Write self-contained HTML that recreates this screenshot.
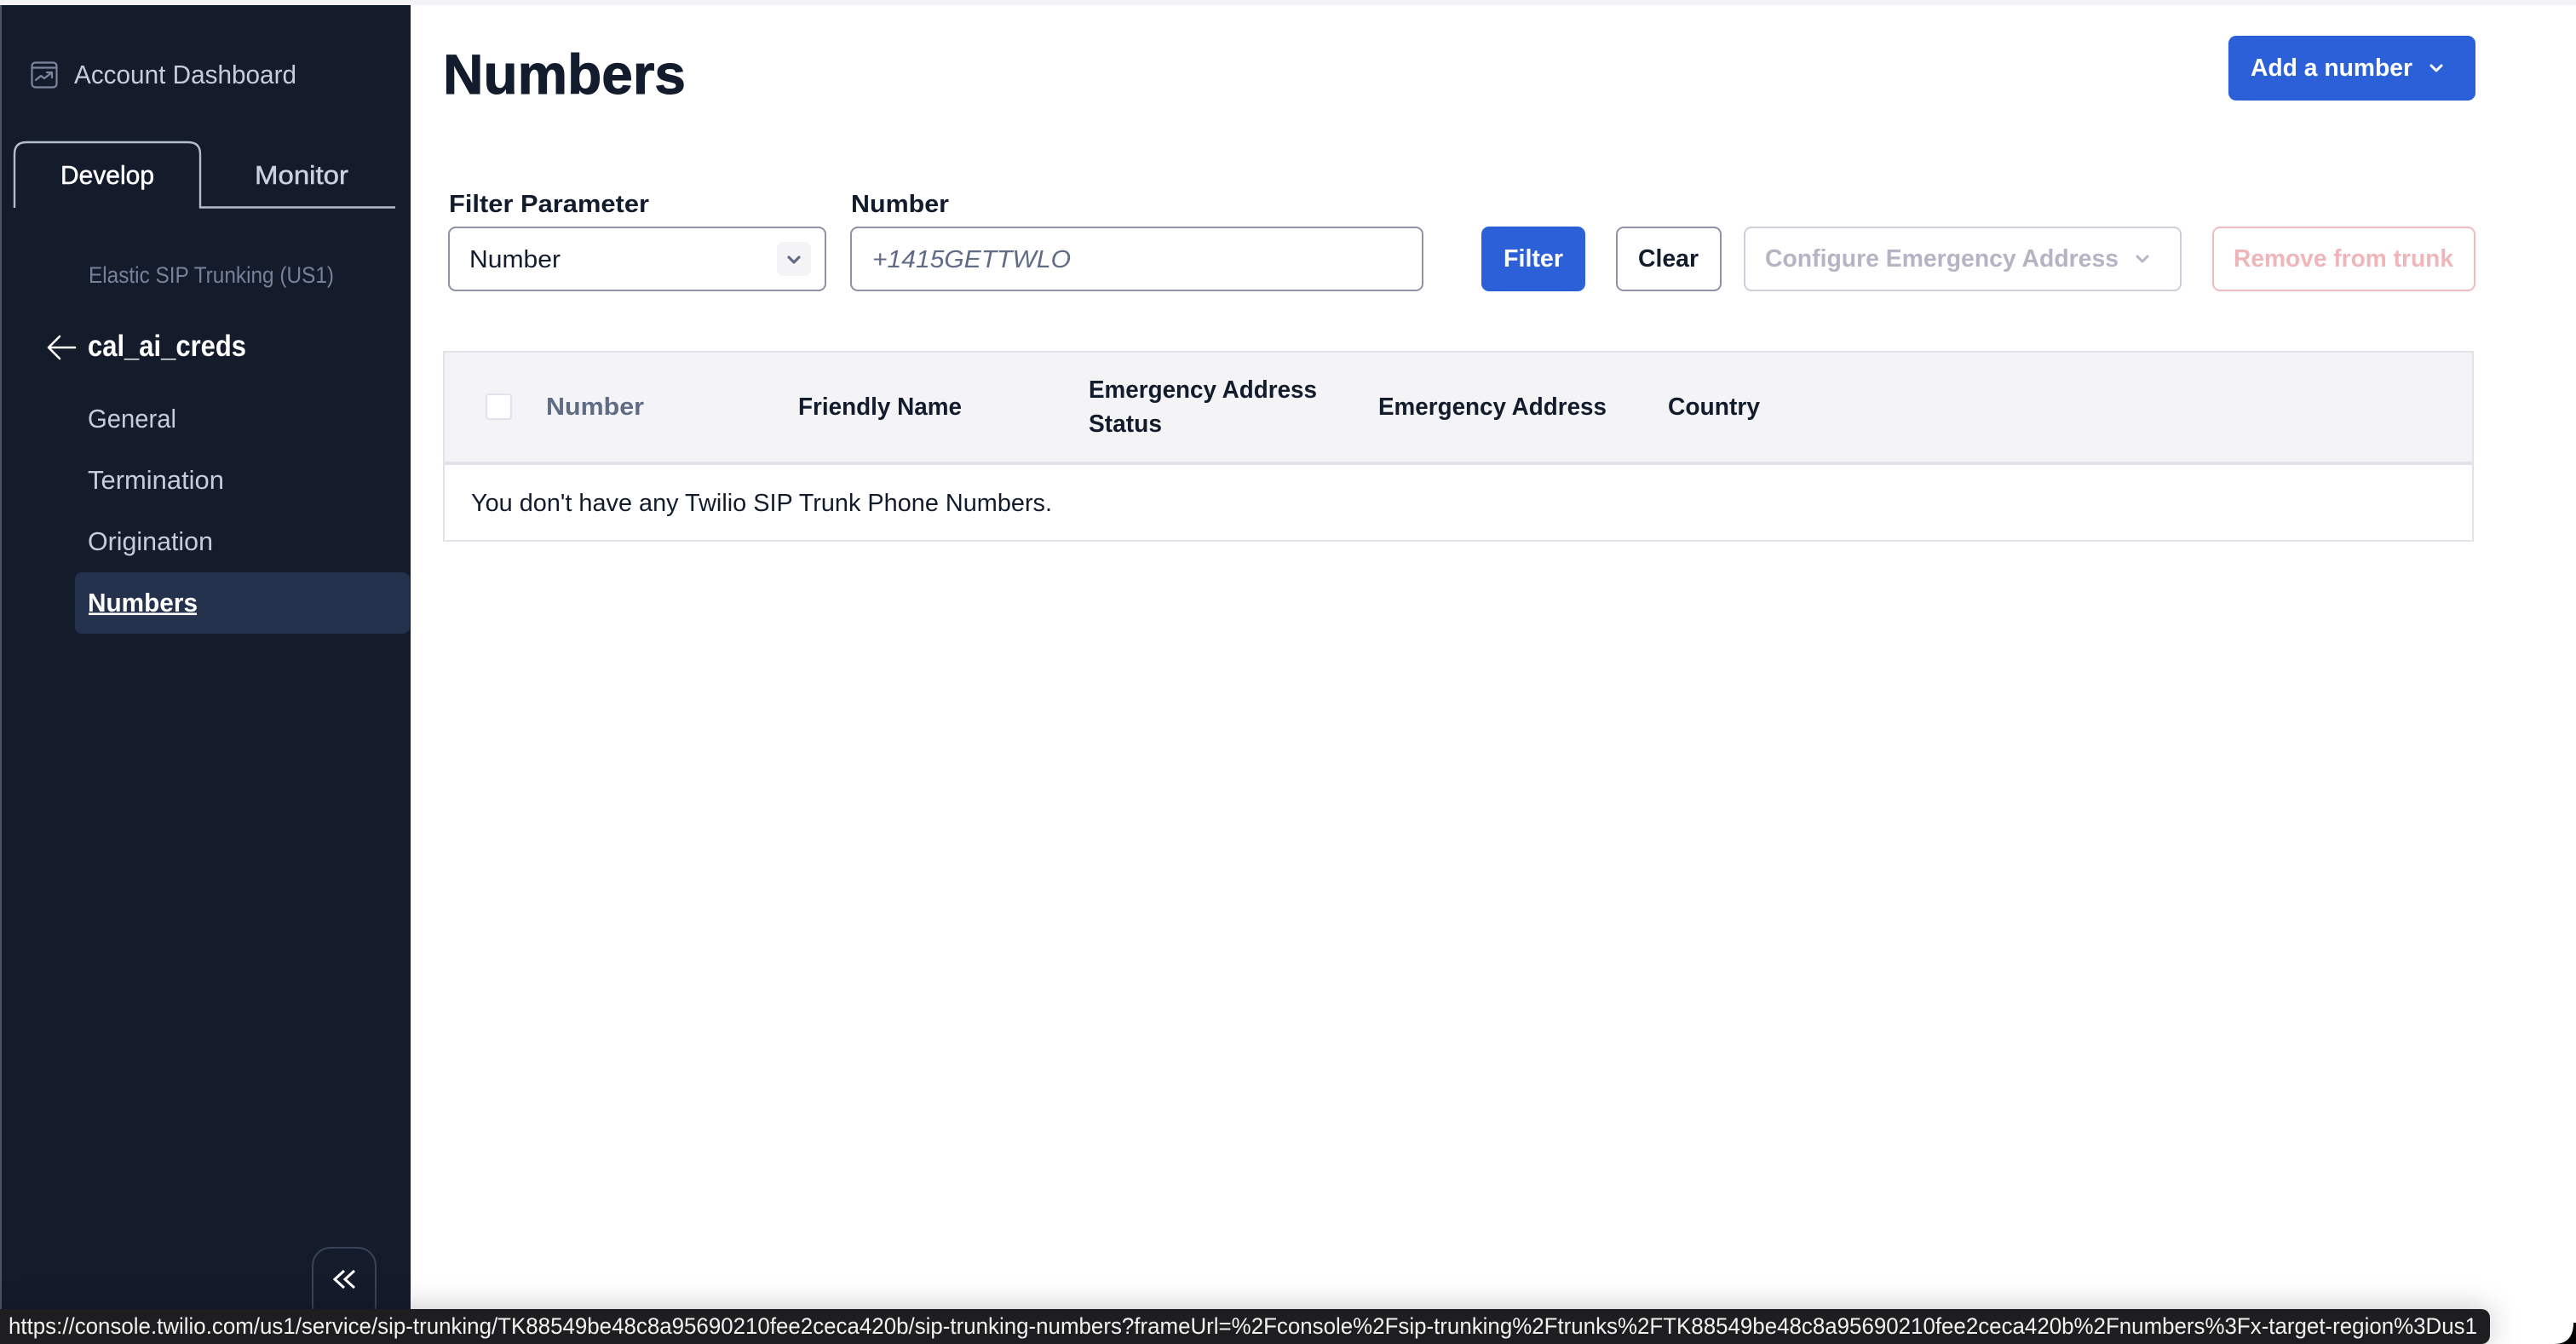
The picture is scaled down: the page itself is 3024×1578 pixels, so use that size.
<!DOCTYPE html>
<html lang="en">
<head>
<meta charset="utf-8">
<title>Numbers</title>
<style>
html,body{margin:0;padding:0;width:3024px;height:1578px;overflow:hidden;background:#fff}
body{position:relative;font-family:"Liberation Sans",sans-serif}
.b{position:absolute;box-sizing:border-box}
svg{position:absolute;left:0;top:0}
text{font-family:"Liberation Sans",sans-serif;white-space:pre}
</style>
</head>
<body>
<div class="b" style="left:0;top:0;width:3024px;height:6px;background:#f4f4f6"></div>
<div class="b" style="left:0;top:6px;width:482px;height:1572px;background:#141c2c;border-left:2px solid #4a5268"></div>
<div class="b" style="left:88px;top:672px;width:393px;height:72px;background:#25324d;border-radius:8px"></div>
<div class="b" style="left:366px;top:1464px;width:76px;height:90px;border:2px solid #3a4358;border-radius:22px"></div>

<div class="b" style="left:2616px;top:42px;width:290px;height:76px;background:#2b60d9;border-radius:9px"></div>
<div class="b" style="left:526px;top:266px;width:444px;height:76px;background:#fff;border:2.5px solid #8f91a5;border-radius:9px"></div>
<div class="b" style="left:912px;top:284px;width:40px;height:40px;background:#f4f4f6;border-radius:8px"></div>
<div class="b" style="left:998px;top:266px;width:673px;height:76px;background:#fff;border:2.5px solid #8f91a5;border-radius:9px"></div>
<div class="b" style="left:1739px;top:266px;width:122px;height:76px;background:#2b60d9;border-radius:9px"></div>
<div class="b" style="left:1897px;top:266px;width:124px;height:76px;background:#fff;border:2.5px solid #8f91a5;border-radius:9px"></div>
<div class="b" style="left:2047px;top:266px;width:514px;height:76px;background:#fff;border:2.5px solid #cfcfda;border-radius:9px"></div>
<div class="b" style="left:2597px;top:266px;width:309px;height:76px;background:#fff;border:2.5px solid #ecbcbe;border-radius:9px"></div>

<div class="b" style="left:520px;top:412px;width:2384px;height:224px;background:#fff;border:2px solid #e1e3ea"></div>
<div class="b" style="left:522px;top:414px;width:2380px;height:132px;background:#f4f4f6;border-bottom:4px solid #e1e3ea"></div>
<div class="b" style="left:570px;top:462px;width:31px;height:31px;background:#fff;border:2px solid #e1e3ea;border-radius:4px"></div>

<div class="b" style="left:0;top:1537px;width:2923px;height:41px;background:#1e1e20;border-radius:0 10px 10px 0;box-shadow:0 0 36px rgba(0,0,0,.24)"></div>

<svg width="3024" height="1578" viewBox="0 0 3024 1578" xmlns="http://www.w3.org/2000/svg">
  <!-- window corner -->
  <path d="M3024 1553V1578H2998Q3021 1578 3021 1553Z" fill="#000"/>

  <!-- sidebar icons -->
  <g fill="none" stroke="#7c859d" stroke-width="2.2" stroke-linecap="round" stroke-linejoin="round">
    <rect x="37.5" y="73.5" width="29" height="29" rx="4"/>
    <path d="M37.5 79.5H66.5"/>
    <path d="M42 94L48 89L52 92L61 85"/>
    <path d="M55 85H61V91"/>
  </g>
  <path d="M70 395L57 408L70 421M57 408H88" fill="none" stroke="#fff" stroke-width="2.6" stroke-linecap="round" stroke-linejoin="round"/>
  <path d="M404 1492L393 1502L404 1512M416 1492L405 1502L416 1512" fill="none" stroke="#fff" stroke-width="3"/>

  <!-- tabs -->
  <path d="M17 244V181Q17 167 31 167H221Q235 167 235 181V243.5H464" fill="none" stroke="#b3bbce" stroke-width="2.4"/>

  <!-- sidebar text -->
  <text x="87" y="98" font-size="31" fill="#c6ccdb" textLength="261" lengthAdjust="spacingAndGlyphs">Account Dashboard</text>
  <text x="71" y="216" font-size="31" fill="#fff" stroke="#fff" stroke-width=".5" textLength="110" lengthAdjust="spacingAndGlyphs">Develop</text>
  <text x="299" y="216" font-size="31" fill="#c9d0df" stroke="#c9d0df" stroke-width=".5" textLength="110" lengthAdjust="spacingAndGlyphs">Monitor</text>
  <text x="104" y="332" font-size="27" fill="#78819a" textLength="288" lengthAdjust="spacingAndGlyphs">Elastic SIP Trunking (US1)</text>
  <text x="103" y="418" font-size="35" font-weight="700" fill="#fff" textLength="186" lengthAdjust="spacingAndGlyphs">cal_ai_creds</text>
  <text x="103" y="502" font-size="31" fill="#c6ccdb" textLength="104" lengthAdjust="spacingAndGlyphs">General</text>
  <text x="103" y="574" font-size="31" fill="#c6ccdb" textLength="160" lengthAdjust="spacingAndGlyphs">Termination</text>
  <text x="103" y="646" font-size="31" fill="#c6ccdb" textLength="147" lengthAdjust="spacingAndGlyphs">Origination</text>
  <text x="103" y="718" font-size="31" font-weight="700" fill="#fff" textLength="129" lengthAdjust="spacingAndGlyphs">Numbers</text>
  <rect x="104" y="719.5" width="127" height="2.6" fill="#fff"/>

  <!-- header -->
  <text x="520" y="110" font-size="66" font-weight="700" fill="#121c2d" stroke="#121c2d" stroke-width="1" textLength="285" lengthAdjust="spacingAndGlyphs">Numbers</text>
  <text x="2642" y="89" font-size="29" font-weight="700" fill="#fff" textLength="190" lengthAdjust="spacingAndGlyphs">Add a number</text>
  <path d="M2854 77L2860 83L2866 77" fill="none" stroke="#fff" stroke-width="3" stroke-linecap="round" stroke-linejoin="round"/>

  <!-- filters -->
  <text x="527" y="249" font-size="29" font-weight="700" fill="#121c2d" textLength="235" lengthAdjust="spacingAndGlyphs">Filter Parameter</text>
  <text x="999" y="249" font-size="29" font-weight="700" fill="#121c2d" textLength="115" lengthAdjust="spacingAndGlyphs">Number</text>
  <text x="551" y="314" font-size="29" fill="#121c2d" textLength="107" lengthAdjust="spacingAndGlyphs">Number</text>
  <path d="M926 302L932 308L938 302" fill="none" stroke="#606b85" stroke-width="3.2" stroke-linecap="round" stroke-linejoin="round"/>
  <text x="1024" y="314" font-size="29" font-style="italic" fill="#606b85" textLength="233" lengthAdjust="spacingAndGlyphs">+1415GETTWLO</text>

  <text x="1765" y="313" font-size="29" font-weight="700" fill="#fff" textLength="70" lengthAdjust="spacingAndGlyphs">Filter</text>
  <text x="1923" y="313" font-size="29" font-weight="700" fill="#121c2d" textLength="71" lengthAdjust="spacingAndGlyphs">Clear</text>
  <text x="2072" y="313" font-size="29" font-weight="700" fill="#b4b4c4" textLength="415" lengthAdjust="spacingAndGlyphs">Configure Emergency Address</text>
  <path d="M2509 301L2515 307L2521 301" fill="none" stroke="#b4b4c4" stroke-width="3" stroke-linecap="round" stroke-linejoin="round"/>
  <text x="2622" y="313" font-size="29" font-weight="700" fill="#efb6ba" textLength="258" lengthAdjust="spacingAndGlyphs">Remove from trunk</text>

  <!-- table -->
  <text x="641" y="487" font-size="29" font-weight="700" fill="#606b85" textLength="115" lengthAdjust="spacingAndGlyphs">Number</text>
  <text x="937" y="487" font-size="29" font-weight="700" fill="#121c2d" textLength="192" lengthAdjust="spacingAndGlyphs">Friendly Name</text>
  <text x="1278" y="467" font-size="29" font-weight="700" fill="#121c2d" textLength="268" lengthAdjust="spacingAndGlyphs">Emergency Address</text>
  <text x="1278" y="507" font-size="29" font-weight="700" fill="#121c2d" textLength="86" lengthAdjust="spacingAndGlyphs">Status</text>
  <text x="1618" y="487" font-size="29" font-weight="700" fill="#121c2d" textLength="268" lengthAdjust="spacingAndGlyphs">Emergency Address</text>
  <text x="1958" y="487" font-size="29" font-weight="700" fill="#121c2d" textLength="108" lengthAdjust="spacingAndGlyphs">Country</text>
  <text x="553" y="600" font-size="29" fill="#121c2d" textLength="682" lengthAdjust="spacingAndGlyphs">You don't have any Twilio SIP Trunk Phone Numbers.</text>

  <!-- status bar -->
  <text x="10" y="1566" font-size="27" fill="#f2f2f2" textLength="2898" lengthAdjust="spacingAndGlyphs">https://console.twilio.com/us1/service/sip-trunking/TK88549be48c8a95690210fee2ceca420b/sip-trunking-numbers?frameUrl=%2Fconsole%2Fsip-trunking%2Ftrunks%2FTK88549be48c8a95690210fee2ceca420b%2Fnumbers%3Fx-target-region%3Dus1</text>
</svg>
</body>
</html>
